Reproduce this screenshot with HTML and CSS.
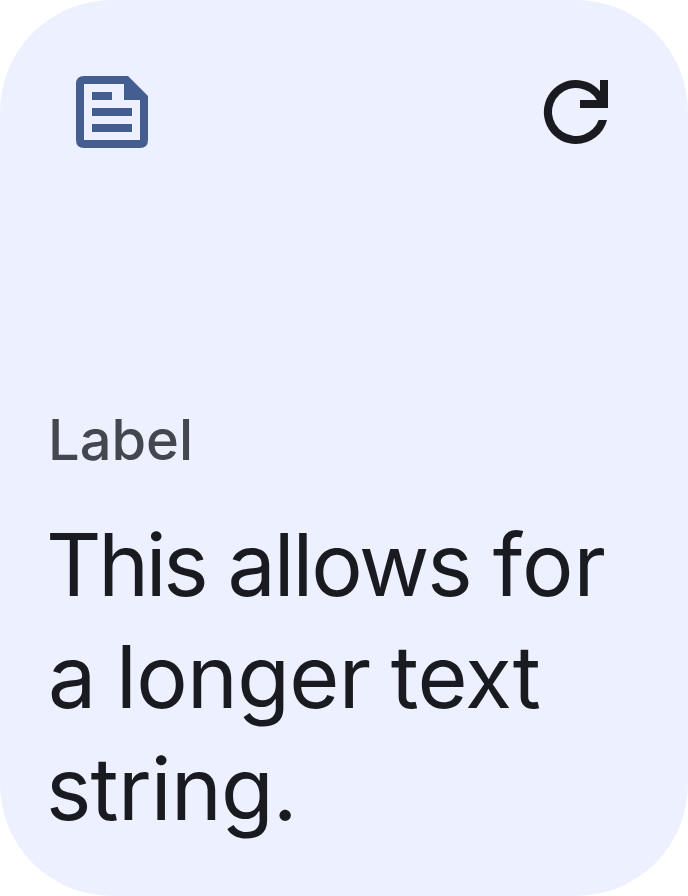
FILE: index.html
```html
<!DOCTYPE html>
<html lang="en">
<head>
<meta charset="utf-8">
<title>Widget</title>
<link rel="stylesheet" href="styles.css">
</head>
<body>
<main class="card">
  <header class="card-header">
    <svg class="icon icon-doc" viewBox="0 0 24 24" aria-hidden="true"><path fill-rule="evenodd" d="M5 3H16L21 8V19Q21 21 19 21H5Q3 21 3 19V5Q3 3 5 3ZM5 5V19H19V9H15V5ZM7 7H12V9H7ZM7 11H17V13H7ZM7 15H17V17H7Z"/></svg>
    <svg class="icon icon-refresh" viewBox="0 0 24 24" aria-hidden="true"><path d="M12 20a8 8 0 1 1 6-13.25V4h2v7h-7V9h4.2A6 6 0 1 0 17.65 14h2.1A8 8 0 0 1 12 20Z"/></svg>
  </header>
  <section class="content">
    <p class="label">Label</p>
    <h1 class="title"><span class="line l1"><span class="tight">This</span> allows <span class="loose">for</span></span> <span class="line l2">a longer text</span> <span class="line l3">string.</span></h1>
  </section>
</main>
</body>
</html>
```

FILE: styles.css
```css
body { margin: 0; background: #fff; font-family: Inter, sans-serif; }
.card { box-sizing: border-box; width: 688px; height: 896px; padding: 64px 48px 51px; border-radius: 112px; background: #ecf0ff; display: flex; flex-direction: column; justify-content: space-between; }
.card-header { display: flex; justify-content: space-between; padding: 0 16px; }
.icon { width: 96px; height: 96px; display: block; }
.icon-doc { fill: #455e91; }
.icon-refresh { fill: #1a1b20; }
.label { margin: 0 0 37px; font-size: 56px; line-height: 64px; font-weight: 500; color: #44474f; }
.title { margin: 0; font-size: 86px; line-height: 112px; font-weight: 400; color: #1a1b20; }
.line { display: block; white-space: nowrap; }
.l1 { margin-left: -2px; letter-spacing: -2.1px; }
.l2 { letter-spacing: -0.7px; word-spacing: -3px; }
.l3 { margin-left: -2px; letter-spacing: -0.8px; }
.tight { letter-spacing: -3.3px; }
.loose { letter-spacing: 0; }
```
